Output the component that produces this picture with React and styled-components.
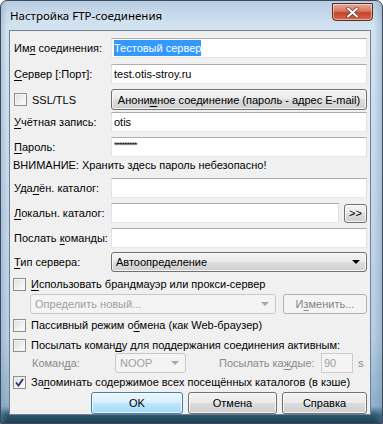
import React from "react";
import styled, { createGlobalStyle, css } from "styled-components";

const Global = createGlobalStyle`
  html, body { margin: 0; padding: 0; background: #ffffff; }
  body { width: 383px; height: 424px; overflow: hidden; }
  * { box-sizing: border-box; }
`;

const FONT = `"Liberation Sans", Arial, sans-serif`;

const Window = styled.div`
  width: 383px;
  height: 424px;
  display: flex;
  flex-direction: column;
  padding: 0 11px 8px 8px;
  border: 1px solid #3a4a5c;
  border-radius: 7px 7px 0 0;
  background:
    linear-gradient(90deg, rgba(120,150,180,0.35) 0px, rgba(255,255,255,0) 6px, rgba(255,255,255,0) calc(100% - 8px), rgba(110,140,170,0.35) 100%),
    linear-gradient(180deg, #b7cde3 0%, #d3e2f0 6%, #c6d9eb 40%, #b6cde3 80%, #8fb0c9 96%, #2f5a72 98%, #1f3e52 100%);
`;

const TitleBar = styled.div`
  height: 29px;
  display: flex;
  align-items: flex-start;
  justify-content: space-between;
`;

const Title = styled.div`
  font-family: "Noto Sans", "Open Sans", sans-serif;
  font-size: 11.5px;
  color: #000;
  padding: 7px 0 0 1px;
  text-shadow: 0 0 8px rgba(255,255,255,0.9);
`;

const CloseBtn = styled.div`
  width: 41px;
  height: 18px;
  margin-top: 2px;
  margin-right: -2px;
  border: 1px solid #5a2a24;
  border-radius: 0 0 4px 4px;
  background: linear-gradient(180deg, #e8a796 0%, #d8775f 45%, #c2432b 55%, #d86a4c 100%);
  box-shadow: inset 0 0 0 1px rgba(255,255,255,0.45);
  display: flex;
  align-items: center;
  justify-content: center;
`;

const Client = styled.div`
  flex: 1;
  background: #f0f0f0;
  border: 1px solid #6d7f94;
  display: flex;
  flex-direction: column;
  padding: 0 3px 0 3px;
  font-family: ${FONT};
  font-size: 11px;
  color: #000;
`;

const Row = styled.div`
  display: flex;
  align-items: center;
  height: ${(p) => p.$h || 20}px;
  margin-top: ${(p) => p.$mt || 0}px;
  padding-left: ${(p) => p.$indent || 0}px;
  gap: ${(p) => p.$gap || 0}px;
`;

const Label = styled.div`
  width: ${(p) => p.$w || 98}px;
  flex-shrink: 0;
  white-space: nowrap;
  color: ${(p) => (p.$disabled ? "#8a8a8a" : "#000")};
  padding-left: ${(p) => (p.$pl != null ? p.$pl : 1)}px;
  margin-right: ${(p) => p.$mr || 0}px;
`;

const U = styled.span`
  text-decoration: underline;
  text-underline-offset: 2px;
`;

const Input = styled.div`
  flex: ${(p) => (p.$w ? "none" : 1)};
  width: ${(p) => (p.$w ? `${p.$w}px` : "auto")};
  height: 20px;
  background: ${(p) => (p.$disabled ? "#f4f4f4" : "#fff")};
  border: 1px solid;
  border-color: ${(p) =>
    p.$disabled ? "#cdcdcd" : "#abadb3 #dbdfe6 #e3e9ef #e2e3ea"};
  display: flex;
  align-items: center;
  padding-left: 2px;
  white-space: nowrap;
  overflow: hidden;
  color: ${(p) => (p.$disabled ? "#a0a0a0" : "#000")};
`;

const Selected = styled.span`
  background: #3399ff;
  color: #fff;
  padding: 2px 0;
`;

const Stars = styled.span`
  font-size: 9px;
  letter-spacing: -1px;
  position: relative;
  top: -2px;
`;

const buttonBase = css`
  height: ${(p) => p.$h || 21}px;
  border-radius: 3px;
  display: flex;
  align-items: center;
  justify-content: center;
  white-space: nowrap;
  font-family: ${FONT};
  font-size: 11px;
`;

const Button = styled.div`
  ${buttonBase};
  flex: ${(p) => (p.$w ? "none" : 1)};
  width: ${(p) => (p.$w ? `${p.$w}px` : "auto")};
  border: 1px solid #707070;
  color: #000;
  background: linear-gradient(180deg, #f2f2f2 0%, #ebebeb 49%, #dddddd 50%, #cfcfcf 100%);
  box-shadow: inset 0 0 0 1px rgba(255,255,255,0.75);
  ${(p) =>
    p.$default &&
    css`
      border-color: #3c7fb1;
      background: linear-gradient(180deg, #eaf6fd 0%, #d9f0fc 49%, #bee6fd 50%, #a7d9f5 100%);
      box-shadow: inset 0 0 0 1px rgba(255,255,255,0.8);
    `}
  ${(p) =>
    p.$disabled &&
    css`
      border-color: #adb2b5;
      background: #f4f4f4;
      color: #838383;
      box-shadow: none;
    `}
`;

const Select = styled.div`
  ${buttonBase};
  flex: ${(p) => (p.$w ? "none" : 1)};
  width: ${(p) => (p.$w ? `${p.$w}px` : "auto")};
  height: 20px;
  justify-content: space-between;
  padding: 0 6px 0 4px;
  border: 1px solid #707070;
  background: linear-gradient(180deg, #f2f2f2 0%, #ebebeb 49%, #dddddd 50%, #cfcfcf 100%);
  box-shadow: inset 0 0 0 1px rgba(255,255,255,0.75);
  ${(p) =>
    p.$disabled &&
    css`
      border-color: #c8c8c8;
      background: #f4f4f4;
      color: #a0a0a0;
      box-shadow: none;
    `}
`;

const Arrow = styled.span`
  width: 0;
  height: 0;
  border-left: 4px solid transparent;
  border-right: 4px solid transparent;
  border-top: 4px solid ${(p) => (p.$disabled ? "#a7a7a7" : "#000")};
`;

const CheckWrap = styled.div`
  display: flex;
  align-items: center;
  gap: 5px;
  white-space: nowrap;
`;

const Box = styled.span`
  width: 13px;
  height: 13px;
  border: 1px solid #8e8f8f;
  background: linear-gradient(135deg, #dcdcdc 0%, #f5f5f5 70%, #ffffff 100%);
  box-shadow: inset 0 0 0 1px #f4f4f4;
  display: inline-flex;
  align-items: center;
  justify-content: center;
  flex-shrink: 0;
`;

const Plain = styled.span`
  white-space: nowrap;
  color: ${(p) => (p.$disabled ? "#8a8a8a" : "#000")};
  margin-left: ${(p) => p.$ml || 0}px;
`;

const ButtonBar = styled.div`
  display: flex;
  justify-content: flex-end;
  gap: 5px;
  margin-top: 2px;
`;

function Check({ checked, children }) {
  return (
    <CheckWrap>
      <Box>
        {checked && (
          <svg width="9" height="9" viewBox="0 0 9 9">
            <path d="M1 4.5 L3.5 7.5 L8 1" fill="none" stroke="#22346c" strokeWidth="1.8" />
          </svg>
        )}
      </Box>
      <span>{children}</span>
    </CheckWrap>
  );
}

export default function App() {
  return (
    <>
      <Global />
      <Window>
        <TitleBar>
          <Title>Настройка FTP-соединения</Title>
          <CloseBtn>
            <svg width="13" height="11" viewBox="0 0 13 11">
              <path d="M2 1.5 L11 9.5 M11 1.5 L2 9.5" stroke="#5a2a24" strokeWidth="3.4" strokeLinecap="round" />
              <path d="M2 1.5 L11 9.5 M11 1.5 L2 9.5" stroke="#ffffff" strokeWidth="2.2" strokeLinecap="round" />
            </svg>
          </CloseBtn>
        </TitleBar>
        <Client>
          <Row $mt={7}>
            <Label>Им<U>я</U> соединения:</Label>
            <Input><Selected>Тестовый сервер</Selected></Input>
          </Row>
          <Row $mt={6}>
            <Label><U>С</U>ервер [:Порт]:</Label>
            <Input>test.otis-stroy.ru</Input>
          </Row>
          <Row $mt={5} $h={21}>
            <Label><Check>SSL/TLS</Check></Label>
            <Button>Анони<U>м</U>ное соединение (пароль - адрес E-mail)</Button>
          </Row>
          <Row $mt={2}>
            <Label><U>У</U>чётная запись:</Label>
            <Input>otis</Input>
          </Row>
          <Row $mt={5}>
            <Label><U>П</U>ароль:</Label>
            <Input><Stars>*********</Stars></Input>
          </Row>
          <Row $mt={1} $h={14}>
            <Plain>ВНИМАНИЕ: Хранить здесь пароль небезопасно!</Plain>
          </Row>
          <Row $mt={6}>
            <Label>Уда<U>л</U>ён. каталог:</Label>
            <Input />
          </Row>
          <Row $mt={5} $gap={5}>
            <Label $mr={-5}><U>Л</U>окальн. каталог:</Label>
            <Input />
            <Button $w={23} $h={19}>&gt;&gt;</Button>
          </Row>
          <Row $mt={5}>
            <Label>Послать <U>к</U>оманды:</Label>
            <Input />
          </Row>
          <Row $mt={4}>
            <Label><U>Т</U>ип сервера:</Label>
            <Select>
              <span>Автоопределение</span>
              <Arrow />
            </Select>
          </Row>
          <Row $mt={4} $h={16}>
            <Check><U>И</U>спользовать брандмауэр или прокси-сервер</Check>
          </Row>
          <Row $mt={2} $indent={17} $gap={7}>
            <Select $disabled>
              <span>Определить новый...</span>
              <Arrow $disabled />
            </Select>
            <Button $w={84} $h={20} $disabled>И<U>з</U>менить...</Button>
          </Row>
          <Row $mt={3} $h={16}>
            <Check>Пассивный режим о<U>б</U>мена (как Web-браузер)</Check>
          </Row>
          <Row $mt={4} $h={16}>
            <Check>Посылать коман<U>д</U>у для поддержания соединения активным:</Check>
          </Row>
          <Row $mt={0} $indent={18}>
            <Label $w={84} $disabled>Коман<U>д</U>а:</Label>
            <Select $disabled $w={71}>
              <span>NOOP</span>
              <Arrow $disabled />
            </Select>
            <Label $w={135} $pl={33} $disabled>Посылать ка<U>ж</U>дые:</Label>
            <Input $disabled $w={32}>90</Input>
            <Plain $disabled $ml={5}>s</Plain>
          </Row>
          <Row $mt={1} $h={16}>
            <Check checked>За<U>п</U>оминать содержимое всех посещённых каталогов (в кэше)</Check>
          </Row>
          <ButtonBar>
            <Button $w={92} $h={22} $default>OK</Button>
            <Button $w={89} $h={22}>Отмена</Button>
            <Button $w={85} $h={22}>Справка</Button>
          </ButtonBar>
        </Client>
      </Window>
    </>
  );
}
